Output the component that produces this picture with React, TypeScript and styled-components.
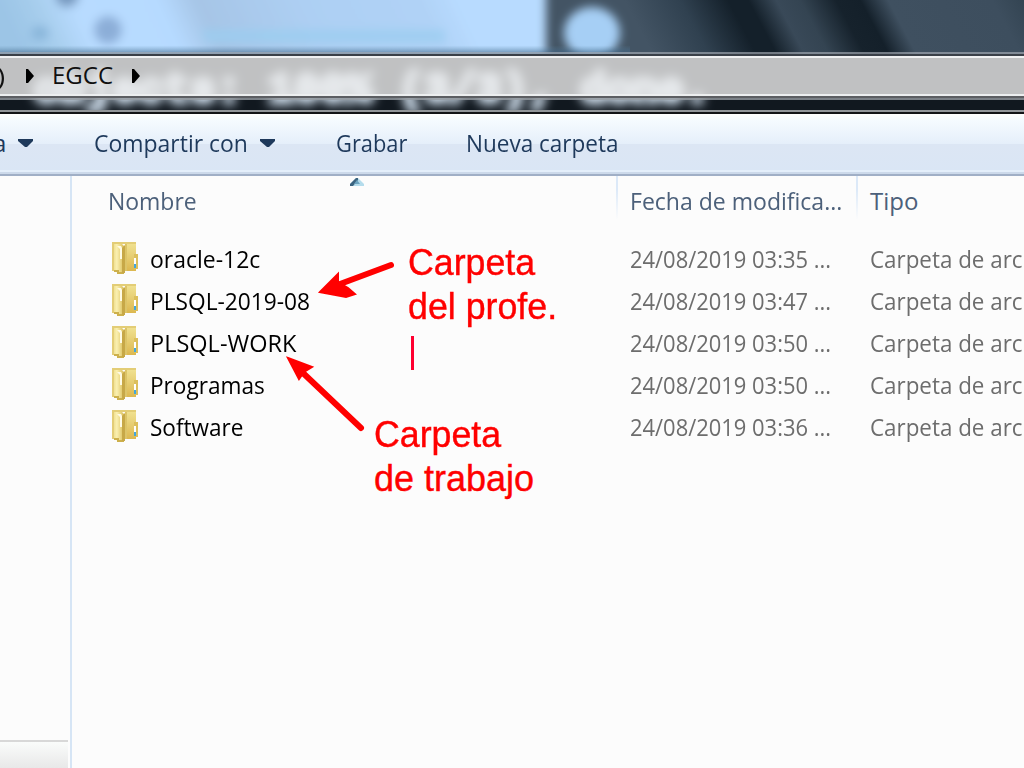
import React, { useLayoutEffect, useRef, useState } from 'react';
import styled, { createGlobalStyle } from 'styled-components';

const GlobalStyle = createGlobalStyle`
  * { box-sizing: border-box; }
  body { margin: 0; overflow: hidden; background: #fcfcfc; }
`;

const Window = styled.main`
  position: relative;
  width: 1024px;
  height: 768px;
  overflow: hidden;
  display: flex;
  flex-direction: column;
  background: #fcfcfc;
  font: 24px/42px 'Open Sans', 'Noto Sans', sans-serif;
  white-space: nowrap;
`;

const FitBox = styled.span<{ $width: number }>`
  display: block;
  flex: none;
  width: ${(p) => p.$width}px;
`;

const FitText = styled.span`
  display: inline-block;
  transform-origin: 0 50%;
`;

function Fit({ width, children }: { width: number; children: string }) {
  const ref = useRef<HTMLSpanElement>(null);
  const [scale, setScale] = useState(1);
  useLayoutEffect(() => {
    if (ref.current) setScale(width / ref.current.offsetWidth);
  }, [width, children]);
  return (
    <FitBox $width={width}>
      <FitText ref={ref} style={{ transform: `scaleX(${scale})` }}>{children}</FitText>
    </FitBox>
  );
}

const Glass = styled.header`
  position: relative;
  flex: none;
  height: 114px;
  padding-top: 52px;
  background: #0c131a;
`;

const Wallpaper = styled.svg`
  position: absolute;
  inset: 0;
`;

const AddressBar = styled.nav`
  position: relative;
  height: 48px;
  border-top: 2px solid rgba(165, 172, 180, 0.65);
  border-bottom: 2px solid rgba(150, 156, 162, 0.8);
`;

const AddressFrame = styled.div`
  height: 44px;
  border-top: 2px solid #3a4048;
  border-bottom: 2px solid #5c5e62;
`;

const AddressInner = styled.div`
  display: flex;
  align-items: center;
  height: 40px;
  border-top: 2px solid #f0f1f2;
  border-bottom: 2px solid #eceeef;
  background: rgba(231, 231, 231, 0.82);
  color: #101010;
`;

const Paren = styled.div`
  width: 29px;
  margin-left: -3px;
`;

const Crumb = styled.div`
  margin: -2px 19px 0 18px;
`;

const GlassEdge = styled.div`
  position: absolute;
  left: 0;
  right: 0;
  bottom: 0;
  height: 4px;
  border-top: 2px solid #92969a;
  border-bottom: 2px solid #121417;
`;

const Toolbar = styled.div`
  flex: none;
  display: flex;
  align-items: center;
  height: 62px;
  padding-bottom: 2px;
  color: #1e395b;
  border-bottom: 2px solid #a0afc6;
  box-shadow: inset 0 -2px #ccd9ea, inset 0 -4px #e4effb;
  background: linear-gradient(#ffffff 0, #f6fbff 5px, #e5effa 30px, #dce6f4 30px, #dae6f5 56px);
`;

const Tool = styled.div<{ $gap: number }>`
  display: flex;
  align-items: center;
  gap: 12px;
  margin-left: ${(p) => p.$gap}px;
`;

const Body = styled.div`
  flex: 1;
  display: flex;
`;

const NavPane = styled.aside`
  width: 72px;
  padding-right: 2px;
  border-right: 2px solid #d6e5f5;
  display: flex;
  flex-direction: column;
  justify-content: flex-end;
`;

const DetailsPane = styled.div`
  width: 68px;
  height: 28px;
  border-top: 2px solid #d8d8d8;
  background: linear-gradient(#fafcfb, #e8e8e8);
`;

const FileList = styled.section`
  flex: 1;
  min-width: 0;
  overflow: hidden;
`;

const Columns = styled.div`
  display: grid;
  grid-template-columns: 544px 240px 1fr;
`;

const Head = styled.div<{ $divided?: boolean; $left: number }>`
  height: 50px;
  padding: 4px 0 0 ${(p) => p.$left}px;
  color: #4c607a;
  background: ${(p) => (p.$divided ? 'linear-gradient(#dce9f8, #dce9f8 30%, #fcfcfc) 0 0 / 2px 44px no-repeat' : 'none')};
`;

const Sort = styled.svg`
  position: absolute;
  left: 350px;
  top: 178px;
`;

const Rows = styled.div`
  padding-top: 12px;
`;

const Row = styled(Columns)`
  height: 42px;
  color: #6d6d6d;
`;

const Name = styled.div`
  display: flex;
  gap: 12px;
  padding-left: 38px;
  color: #000;
`;

const Cell = styled.div`
  padding-left: 14px;
  overflow: hidden;
`;

const Arrows = styled.svg`
  position: absolute;
  left: 0;
  top: 0;
  pointer-events: none;
`;

const Note = styled.div<{ $x: number; $y: number }>`
  position: absolute;
  left: ${(p) => p.$x}px;
  top: ${(p) => p.$y}px;
  color: #ff0000;
  font: 36px/44px 'Liberation Sans', Arial, sans-serif;
  -webkit-text-stroke: 0.4px #ff0000;
`;

const Caret = styled.div`
  width: 3px;
  height: 34px;
  margin: 7px 0 0 3px;
  background: #ff0030;
`;

const Right = () => (
  <svg width="8" height="16" viewBox="0 0 8 16"><path d="M0 1h2l6 7-6 7H0z" fill="#000" /></svg>
);
const Down = () => (
  <svg width="16" height="10" viewBox="0 0 16 10"><path d="M0 1h15v2L9 9H7L0 3z" fill="#1e395b" /></svg>
);

const Folder = () => (
  <svg width="28" height="42" viewBox="0 0 28 42">
    <path d="M15 4h11v29H14z" fill="url(#fr)" />
    <path d="M24 16h4v15h-4z" fill="#dcbf5c" />
    <path d="M2 4h8l4 4v28h-4l-4-2-4-2z" fill="url(#fl)" />
    <path d="M2 5h24M3 4v29" fill="none" stroke="#e3cd76" strokeWidth="2" />
    <path d="M4 33h4v2h6" fill="none" stroke="#cdb04c" strokeWidth="2" />
    <path d="M7 8h4l1 2v11h-2V11z" fill="#fffbe6" />
    <path d="M12 10l3-3v28h-3z" fill="#c7a847" />
    <path d="M15 6h2v27h-2z" fill="#dcc468" />
    <path d="M24 20h2v6h-2z" fill="#fff" />
    <path d="M24 26h2v4h-2z" fill="#43a6dc" />
  </svg>
);

const files = [
  { name: 'oracle-12c', width: 110, date: '24/08/2019 03:35 ...' },
  { name: 'PLSQL-2019-08', width: 160, date: '24/08/2019 03:47 ...' },
  { name: 'PLSQL-WORK', width: 146, date: '24/08/2019 03:50 ...' },
  { name: 'Programas', width: 115, date: '24/08/2019 03:50 ...' },
  { name: 'Software', width: 93, date: '24/08/2019 03:36 ...' },
];

export default function App() {
  return (
    <Window>
      <GlobalStyle />
      <Glass>
        <Wallpaper width="1024" height="114">
          <defs>
            <linearGradient id="sky" gradientUnits="userSpaceOnUse" x1="0" x2="545" y1="0" y2="0" gradientTransform="skewX(25)"><stop stopColor="#9cc5e6" /><stop offset=".06" stopColor="#a6cdec" /><stop offset=".13" stopColor="#b8dbff" /><stop offset=".29" stopColor="#b6daff" /><stop offset=".36" stopColor="#a6c5e6" /><stop offset=".55" stopColor="#adcff3" /><stop offset=".77" stopColor="#b0d2f6" /><stop offset=".84" stopColor="#b8dbff" /></linearGradient>
            <linearGradient id="shade" x1="0" x2="0" y1="0" y2="1"><stop offset=".84" stopColor="#5f89a8" stopOpacity="0" /><stop offset="1" stopColor="#3b6285" stopOpacity=".7" /></linearGradient>
            <linearGradient id="night" gradientUnits="userSpaceOnUse" x1="624" x2="1024" y1="0" y2="0" gradientTransform="skewX(28)">
              <stop stopColor="#435464" />
              <stop offset=".14" stopColor="#304150" />
              <stop offset=".26" stopColor="#14202a" />
              <stop offset=".31" stopColor="#14202a" />
              <stop offset=".38" stopColor="#394958" />
              <stop offset=".44" stopColor="#344452" />
              <stop offset=".53" stopColor="#16222c" />
              <stop offset=".59" stopColor="#14202a" />
              <stop offset=".66" stopColor="#3f5060" />
              <stop offset=".92" stopColor="#3d4e5e" />
              <stop offset="1" stopColor="#334452" />
            </linearGradient>
            <linearGradient id="fl"><stop stopColor="#ead680" /><stop offset=".4" stopColor="#faf0b0" /><stop offset="1" stopColor="#d9bd59" /></linearGradient>
            <linearGradient id="fr" x1="0" x2="0" y1="0" y2="1"><stop stopColor="#f1e394" /><stop offset="1" stopColor="#dcb850" /></linearGradient>
            <filter id="soft" x="-30%" y="-60%" width="160%" height="220%"><feGaussianBlur stdDeviation="5" /></filter>
            <filter id="haze" x="-10%" y="-60%" width="120%" height="220%"><feGaussianBlur stdDeviation="5.5" /></filter>
          </defs>
          <rect width="1024" height="54" fill="url(#night)" />
          <g filter="url(#soft)">
            <path d="M-30-30h576v105H-30z" fill="url(#sky)" />
            <circle cx="108" cy="30" r="14" fill="#8caed8" />
            <circle cx="67" cy="-5" r="12" fill="#7799bf" />
            <ellipse cx="40" cy="33" rx="9" ry="7" fill="#88b5da" />
            <ellipse cx="592" cy="33" rx="28" ry="26" fill="#a6cff5" />
            <path d="M200 30h245v12H206z" fill="#9acdf0" opacity=".8" />
          </g>
          <rect width="630" height="54" fill="url(#shade)" />
          <rect y="54" width="1024" height="60" fill="#11181f" />
          <g filter="url(#haze)">
            <text x="34" y="102" textLength="676" fontFamily="Liberation Mono, monospace" fontSize="43" fontWeight="bold" fill="#f0f9ff" stroke="#e0f0ff" strokeWidth="5">objects: 100% (3/3), done.</text>
          </g>
        </Wallpaper>
        <AddressBar>
          <AddressFrame>
            <AddressInner>
              <Paren><Fit width={8}>)</Fit></Paren>
              <Right />
              <Crumb><Fit width={61}>EGCC</Fit></Crumb>
              <Right />
            </AddressInner>
          </AddressFrame>
        </AddressBar>
        <GlassEdge />
      </Glass>
      <Toolbar>
        <Tool $gap={-7}><Fit width={13}>a</Fit><Down /></Tool>
        <Tool $gap={60}><Fit width={154}>Compartir con</Fit><Down /></Tool>
        <Tool $gap={60}><Fit width={71}>Grabar</Fit></Tool>
        <Tool $gap={59}><Fit width={153}>Nueva carpeta</Fit></Tool>
      </Toolbar>
      <Body>
        <NavPane><DetailsPane /></NavPane>
        <FileList>
          <Columns>
            <Head $left={36}><Fit width={89}>Nombre</Fit></Head>
            <Head $left={14} $divided><Fit width={212}>Fecha de modifica...</Fit></Head>
            <Head $left={14} $divided><Fit width={48}>Tipo</Fit></Head>
          </Columns>
          <Rows>
            {files.map((f) => (
              <Row key={f.name}>
                <Name><Folder /><Fit width={f.width}>{f.name}</Fit></Name>
                <Cell><Fit width={201}>{f.date}</Fit></Cell>
                <Cell><Fit width={207}>Carpeta de archivos</Fit></Cell>
              </Row>
            ))}
          </Rows>
        </FileList>
      </Body>
      <Sort width="14" height="8"><path d="M6 0h2l6 6v2H0V6z" fill="#b4dcec" /><path d="M6 0h2v2L3 8H0V6z" fill="#3c6480" /><path d="M7 2l3 4H4z" fill="#6ba3bf" /></Sort>
      <Arrows width="1024" height="768" stroke="#ff0000" fill="#ff0000">
        <path d="M391 265L340 284" strokeWidth="6" strokeLinecap="round" />
        <path d="M320 292L338 274 338 282 348 288 355 294 346 297z" strokeWidth="2" />
        <path d="M361 428L303 373" strokeWidth="6" strokeLinecap="round" />
        <path d="M288 358L312 367 304 372 299 379z" strokeWidth="2" />
      </Arrows>
      <Note $x={408} $y={241}>
        <Fit width={127}>Carpeta</Fit>
        <Fit width={149}>del profe.</Fit>
        <Caret />
      </Note>
      <Note $x={374} $y={413}>
        <Fit width={127}>Carpeta</Fit>
        <Fit width={160}>de trabajo</Fit>
      </Note>
    </Window>
  );
}
